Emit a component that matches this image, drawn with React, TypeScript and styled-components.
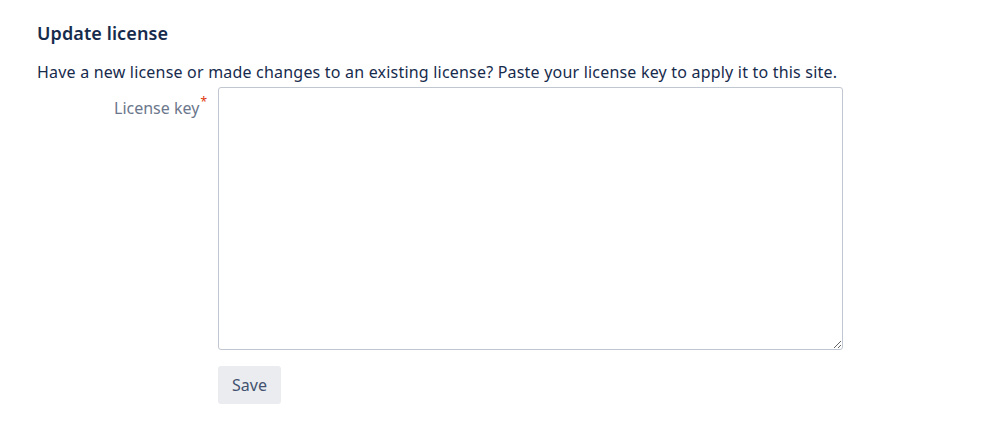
import React from "react";
import styled, { createGlobalStyle } from "styled-components";

const GlobalStyle = createGlobalStyle`
  body {
    margin: 0;
    background: #ffffff;
    font-family: "Noto Sans", "Open Sans", sans-serif;
    color: #172b4d;
  }
`;

const Page = styled.div`
  padding: 20px 37px;
`;

const Title = styled.h2`
  margin: 0;
  font-size: 18px;
  font-weight: 600;
  line-height: 26px;
  letter-spacing: 0.1px;
  color: #172b4d;
`;

const Intro = styled.p`
  margin: 14px 0 0;
  font-size: 16px;
  line-height: 24px;
  letter-spacing: 0.2px;
  color: #172b4d;
`;

const Form = styled.form`
  display: grid;
  grid-template-columns: 170px 625px;
  column-gap: 11px;
  row-gap: 16px;
  margin-top: 3px;
`;

const Label = styled.label`
  text-align: right;
  padding-top: 9px;
  font-size: 16px;
  line-height: 24px;
  color: #6b778c;
`;

const Required = styled.span`
  color: #de350b;
  font-size: 12px;
  vertical-align: top;
  position: relative;
  top: -6px;
  margin-left: 1px;
`;

const KeyInput = styled.textarea`
  box-sizing: border-box;
  width: 625px;
  height: 263px;
  border: 1px solid #c1c7d0;
  border-radius: 3px;
  padding: 8px;
  font-family: inherit;
  font-size: 14px;
  resize: both;
  outline: none;
`;

const SaveButton = styled.button`
  grid-column: 2;
  justify-self: start;
  height: 38px;
  width: 63px;
  padding: 0;
  border: none;
  border-radius: 3px;
  background: #ebecf0;
  color: #42526e;
  font-family: inherit;
  font-size: 16px;
  cursor: pointer;
`;

export default function App() {
  return (
    <>
      <GlobalStyle />
      <Page>
        <Title>Update license</Title>
        <Intro>
          Have a new license or made changes to an existing license? Paste your license key to apply it to this site.
        </Intro>
        <Form onSubmit={(e) => e.preventDefault()}>
          <Label htmlFor="license-key">
            License key<Required>*</Required>
          </Label>
          <KeyInput id="license-key" />
          <SaveButton type="submit">Save</SaveButton>
        </Form>
      </Page>
    </>
  );
}
